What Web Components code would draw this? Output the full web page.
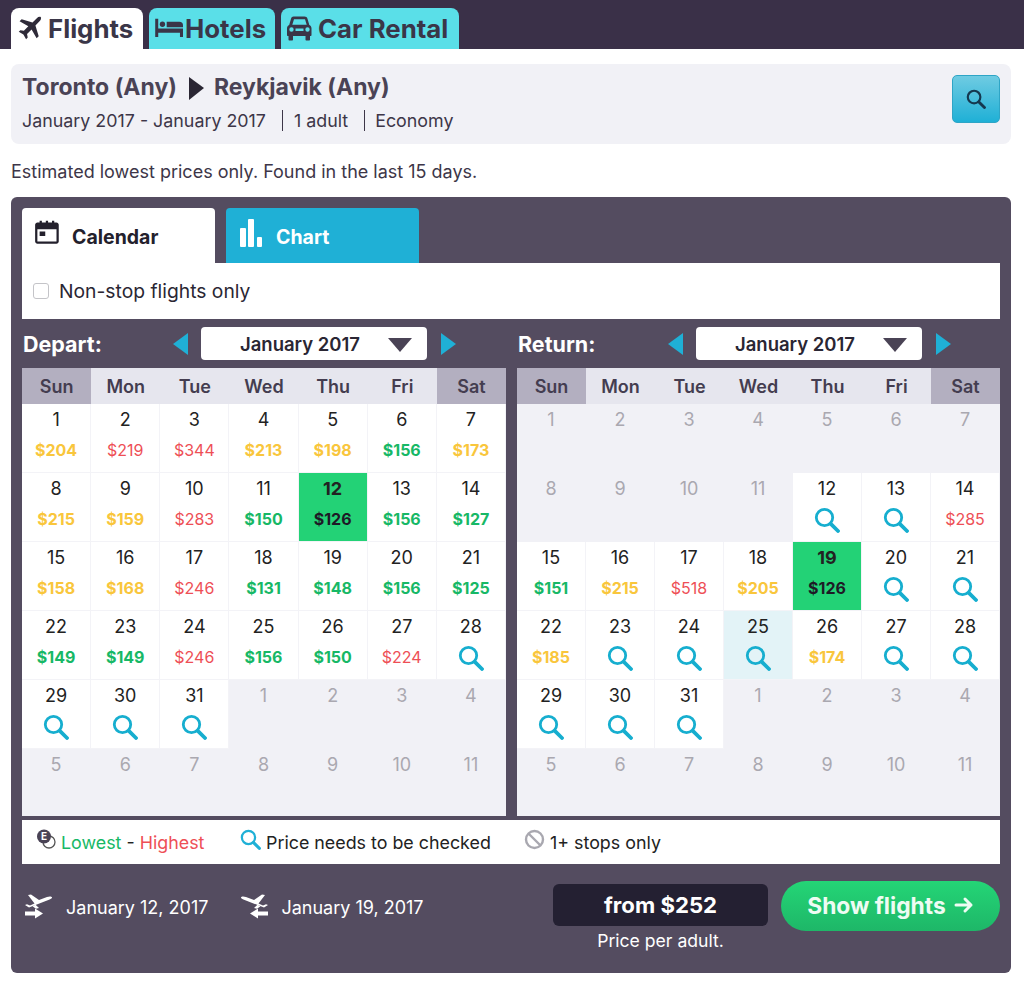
<!DOCTYPE html>
<html>
<head>
<meta charset="utf-8">
<style>
  html, body { margin: 0; padding: 0; background: #fff; }
  body { font-family: Inter, "Liberation Sans", sans-serif; color: #3d3648; }
</style>
</head>
<body>
<flight-search></flight-search>
<script>
const icons = {
  plane: `<path d="M21 2.2c-1-1-2.8-.7-4 .5l-3.7 3.7L4 3.6 2.200 5.400l7.500 4.300-3.800 3.900-3-.6L1.500 14.400l4 2.300 2.300 4 1.400-1.400-.6-3 3.900-3.800 4.300 7.500 1.800-1.800-2.800-9.300 3.700-3.700c1.200-1.200 1.500-2.900.5-4z"/>`,
  bed: `<path d="M1 4h2.500v8H24v7h-2.500v-3.500h-18V19H1z"/><circle cx="7" cy="8.500" r="2.200"/><path d="M10.500 6.500h10.500a3 3 0 0 1 3 3V11H10.500z"/>`,
  car: `<path fill-rule="evenodd" d="M6.500.5h11c1.500 0 2.600.9 3 2.200l1.800 6.300c1.300.6 2.200 1.900 2.200 3.400V19c0 .6-.4 1-1 1h-.5v3.500c0 .6-.4 1-1 1h-2.500c-.6 0-1-.4-1-1V20H6v3.500c0 .6-.4 1-1 1H2.500c-.6 0-1-.4-1-1V20H1c-.6 0-1-.4-1-1v-6.600c0-1.500.9-2.800 2.200-3.400L4 2.700C4.400 1.400 5.400.5 6.500.5zM7 3.200 5.300 8.800h14.400L18 3.200zM4.500 11.300a2.200 2.200 0 1 0 0 4.400 2.200 2.200 0 0 0 0-4.400zm16 0a2.200 2.200 0 1 0 0 4.400 2.200 2.200 0 0 0 0-4.400zM8.500 12.500v2.500h8v-2.500z"/>`,
  calendar: `<path fill-rule="evenodd" d="M3 3h2V1.500h2V3h3.500V1.500h2V3H16V1.500h2V3h2c1 0 2 1 2 2v15c0 1-1 2-2 2H3c-1 0-2-1-2-2V5c0-1 1-2 2-2zm0 6v11h17V9zM5 11h5v4H5z"/>`,
  takeoff: `<path d="M3 2l3-.5 8 5.500 8-3c2-.7 4.500-.7 5 .2.300.8-1 1.800-3 2.500L4 14.500 0 12l2-.8 3 1.300 4.500-2z"/><path d="M10.500 11.800 14 15l-3 .7-3.500-2.400z"/><path d="M0 18.500h10v-3l8 5-8 5v-3H0z"/>`
};

function svg(name, size, color) {
  return `<svg width="${size}" height="${size}" viewBox="0 0 24 24" fill="${color}" aria-hidden="true">${icons[name]}</svg>`;
}

function lens(size, color) {
  return `<svg width="${size}" height="${size}" viewBox="0 0 26 26" fill="none" stroke="${color}" aria-hidden="true"><circle cx="10.500" cy="10.500" r="8.200" stroke-width="2.800"/><path d="M16.800 16.800 24 24" stroke-width="3.800" stroke-linecap="round"/></svg>`;
}

class TopTabs extends HTMLElement {
  constructor() {
    super();
    this.attachShadow({mode: 'open'});
    this.shadowRoot.innerHTML = `
      <style>
        :host { display: flex; align-items: flex-end; gap: 6px; height: 49px; padding-left: 11px; background: #3a3048; }
        a { display: flex; align-items: center; height: 41px; box-sizing: border-box; border-radius: 8px 8px 0 0; background: #5adfe8; color: #3a3648; font-size: 25.800px; font-weight: 700; }
        a.on { background: #fff; }
        svg { flex: none; display: block; }
      </style>
      <a class="on" style="width:132px;padding-left:6px;gap:3px">${svg('plane', 28, '#2e2a38')}Flights</a>
      <a style="width:126px;padding-left:5px;gap:2px">${svg('bed', 29, '#3a3648')}Hotels</a>
      <a style="width:178px;padding-left:6px;gap:6px"><svg width="25" height="25" viewBox="0 0 25 25" fill="#3a3648" aria-hidden="true">${icons.car}</svg>Car Rental</a>`;
  }
}

class TripSummary extends HTMLElement {
  constructor() {
    super();
    this.attachShadow({mode: 'open'});
    this.shadowRoot.innerHTML = `
      <style>
        :host { display: flex; align-items: center; justify-content: space-between; height: 80px; margin: 15px 13px 0 11px; padding: 0 11px; box-sizing: border-box; background: #f1f1f6; border-radius: 8px; }
        .text { padding-bottom: 4px; }
        .route { display: flex; align-items: center; font-size: 23px; font-weight: 700; color: #4a4355; height: 30px; }
        .route svg { margin: 2px 10px 0 12px; }
        .meta { display: flex; align-items: center; margin-top: 7px; font-size: 17.850px; color: #3d3648; height: 24px; }
        .meta span + span { border-left: 1px solid #3d3648; margin-left: 16px; padding-left: 11px; }
        .meta span:last-child { padding-left: 10px; }
        .go { width: 48px; height: 48px; margin-top: -10px; box-sizing: border-box; border: 1px solid #2ea5c6; border-radius: 5px; background: linear-gradient(#6fcbe2, #1fb0d6); display: flex; align-items: center; justify-content: center; }
      </style>
      <div class="text">
        <div class="route">Toronto (Any)<svg width="15" height="24" viewBox="0 0 15 24" fill="#2a2633"><path d="M0 1l15 11L0 24z"/></svg>Reykjavik (Any)</div>
        <div class="meta"><span>January 2017 - January 2017</span><span>1 adult</span><span>Economy</span></div>
      </div>
      <div class="go">${lens(20, '#15384f')}</div>`;
  }
}

class CalMonth extends HTMLElement {
  constructor() {
    super();
    this.attachShadow({mode: 'open'});
    const days = ['Sun', 'Mon', 'Tue', 'Wed', 'Thu', 'Fri', 'Sat'];
    const cells = this.data.map(c => this.#cell(c)).join('');
    this.shadowRoot.innerHTML = `
      <style>
        :host { display: block; width: 484px; }
        .head { display: flex; align-items: center; height: 49px; color: #fff; font-size: 21.500px; font-weight: 700; }
        .label { width: 151px; padding-left: 1px; box-sizing: border-box; }
        .sel { display: flex; align-items: center; justify-content: center; position: relative; width: 226px; height: 33px; margin: 0 14px 0 13px; background: #fff; border-radius: 4px; color: #2a2633; font-size: 18.500px; font-weight: 600; box-sizing: border-box; padding-right: 28px; }
        .sel svg { position: absolute; right: 15px; top: 11px; }
        .week, .grid { display: grid; grid-template-columns: repeat(7, 1fr); }
        .week { height: 36px; background: #e6e6ee; }
        .week div { display: flex; align-items: center; justify-content: center; font-size: 18px; font-weight: 600; color: #443d50; }
        .week .end { background: #b3afc0; }
        .grid { grid-auto-rows: 69px; background: #f1f1f6; height: 412px; }
        .day { box-sizing: border-box; display: flex; flex-direction: column; align-items: center; padding-top: 5px; font-size: 18px; color: #222; background: #fff; border-right: 1px solid #f3f3f7; border-bottom: 1px solid #f3f3f7; }
        .day b { display: block; height: 21px; line-height: 21px; font-weight: 400; }
        .day i { display: block; margin-top: 9px; font-style: normal; font-size: 16px; line-height: 22px; font-weight: 400; }
        .day svg { margin-top: 8px; display: block; }
        .off { background: transparent; color: #aaa8b0; border-color: transparent; }
        .g i { color: #17b866; font-weight: 700; }
        .y i { color: #f9c63c; font-weight: 700; }
        .r i { color: #ee4f56; }
        .pick { background: #23d276; }
        .pick b { font-weight: 700; }
        .pick i { color: #1e1a26; font-weight: 700; }
        .hi { background: #e3f3f7; }
      </style>
      <div class="head">
        <div class="label">${this.getAttribute('label')}</div>
        <svg width="15" height="22" viewBox="0 0 15 22" fill="#1fb0d6"><path d="M15 0v22L0 11z"/></svg>
        <div class="sel">January 2017<svg width="24" height="14" viewBox="0 0 24 14" fill="#4a4355"><path d="M0 0h24L12 14z"/></svg></div>
        <svg width="15" height="22" viewBox="0 0 15 22" fill="#1fb0d6"><path d="M0 0v22l15-11z"/></svg>
      </div>
      <div class="week">${days.map((d, i) => `<div class="${i % 6 ? '' : 'end'}">${d}</div>`).join('')}</div>
      <div class="grid">${cells}</div>`;
  }

  get data() {
    return JSON.parse(this.getAttribute('days'));
  }

  #cell([day, kind, price]) {
    if (kind === 'off') return `<div class="day off"><b>${day}</b></div>`;
    if (kind === 's' || kind === 'hi') return `<div class="day ${kind}"><b>${day}</b>${lens(26, '#16aecf')}</div>`;
    return `<div class="day ${kind}"><b>${day}</b><i>$${price}</i></div>`;
  }
}

class CalLegend extends HTMLElement {
  constructor() {
    super();
    this.attachShadow({mode: 'open'});
    this.shadowRoot.innerHTML = `
      <style>
        :host { display: flex; align-items: center; height: 44px; margin-top: 4px; background: #fff; font-size: 17.850px; color: #222; padding-left: 13px; box-sizing: border-box; }
        .g { color: #17b866; } .r { color: #ee4f56; }
        span.item { display: flex; align-items: center; gap: 5px; white-space: pre; }
        svg { display: block; margin-top: -6px; }
      </style>
      <span class="item" style="width:205px;gap:4px"><svg width="22" height="22" viewBox="0 0 22 22"><circle cx="14" cy="14" r="6" fill="none" stroke="#555" stroke-width="1.300"/><circle cx="9" cy="8.500" r="7" fill="#4a4355"/><text x="9" y="12" font-size="10" font-weight="700" text-anchor="middle" fill="#fff" font-family="Inter">E</text></svg><span><span class="g">Lowest</span> - <span class="r">Highest</span></span></span>
      <span class="item" style="width:284px">${lens(21, '#1fb0d6')}<span>Price needs to be checked</span></span>
      <span class="item"><svg width="21" height="21" viewBox="0 0 21 21" fill="none" stroke="#a9a8b0" stroke-width="2.400"><circle cx="10.500" cy="10.500" r="8.500"/><path d="M4.500 4.500l12 12"/></svg><span>1+ stops only</span></span>`;
  }
}

class CalFooter extends HTMLElement {
  constructor() {
    super();
    this.attachShadow({mode: 'open'});
    const plane = `<svg width="27" height="27" viewBox="0 0 27 27" fill="#fff" aria-hidden="true">`;
    this.shadowRoot.innerHTML = `
      <style>
        :host { display: flex; align-items: flex-start; padding-top: 17px; height: 87px; box-sizing: border-box; color: #fff; font-size: 18px; }
        .date { display: flex; align-items: center; height: 50px; padding-left: 3px; }
        .date span { padding-top: 2px; }
        .date svg { margin-right: 14px; }
        .date + .date { margin-left: 30px; }
        .date + .date svg { margin-right: 13px; }
        .fill { flex: 1; }
        .price { width: 215px; margin-right: 13px; padding-top: 3px; text-align: center; font-size: 17.600px; }
        .price div { height: 42px; line-height: 42px; margin-bottom: 4px; background: #242032; border-radius: 6px; font-size: 22.200px; font-weight: 700; }
        .show { display: flex; align-items: center; justify-content: center; gap: 8px; width: 219px; height: 50px; padding-bottom: 2px; box-sizing: border-box; border-radius: 25px; background: linear-gradient(#24d576, #1eb768); font-size: 22.800px; font-weight: 700; color: #eefcf3; }
      </style>
      <div class="date">${plane}${icons.takeoff}</svg><span>January 12, 2017</span></div>
      <div class="date">${plane}<g transform="matrix(-1 0 0 1 27 0)">${icons.takeoff}</g></svg><span>January 19, 2017</span></div>
      <div class="fill"></div>
      <div class="price"><div>from $252</div>Price per adult.</div>
      <div class="show">Show flights <svg width="20" height="18" viewBox="0 0 20 18" fill="none" stroke="#eefcf3" stroke-width="3" stroke-linecap="round" stroke-linejoin="round"><path d="M2 9h15M11 3l6 6-6 6"/></svg></div>`;
  }
}

class CalPanel extends HTMLElement {
  constructor() {
    super();
    this.attachShadow({mode: 'open'});
    const q = (from, to, kind) => {
      const out = [];
      for (let d = from; d <= to; d++) out.push([d, kind]);
      return out;
    };
    const depart = [
      [1,'y',204],[2,'r',219],[3,'r',344],[4,'y',213],[5,'y',198],[6,'g',156],[7,'y',173],
      [8,'y',215],[9,'y',159],[10,'r',283],[11,'g',150],[12,'pick',126],[13,'g',156],[14,'g',127],
      [15,'y',158],[16,'y',168],[17,'r',246],[18,'g',131],[19,'g',148],[20,'g',156],[21,'g',125],
      [22,'g',149],[23,'g',149],[24,'r',246],[25,'g',156],[26,'g',150],[27,'r',224],
      ...q(28, 31, 's'), ...q(1, 11, 'off')
    ];
    const ret = [
      ...q(1, 11, 'off'), ...q(12, 13, 's'), [14,'r',285],
      [15,'g',151],[16,'y',215],[17,'r',518],[18,'y',205],[19,'pick',126], ...q(20, 21, 's'),
      [22,'y',185], ...q(23, 24, 's'), [25,'hi'], [26,'y',174], ...q(27, 28, 's'),
      ...q(29, 31, 's'), ...q(1, 11, 'off')
    ];
    this.shadowRoot.innerHTML = `
      <style>
        :host { display: block; margin: 0 13px 0 11px; padding: 11px 11px 0 11px; height: 776px; box-sizing: border-box; background: #544c60; border-radius: 6px; }
        .tabs { display: flex; gap: 11px; height: 55px; }
        .tab { display: flex; align-items: center; width: 193px; box-sizing: border-box; padding-left: 12px; border-radius: 4px 4px 0 0; font-size: 19.500px; font-weight: 700; }
        .tab span { padding-top: 3px; }
        .tab svg { display: block; margin-top: -6px; }
        .cal { background: #fff; color: #23202c; gap: 11px; }
        .chart { background: #1fb0d6; color: #fff; gap: 10px; }
        .stop { display: flex; align-items: center; height: 56px; background: #fff; padding-left: 11px; font-size: 19.300px; color: #2a2633; gap: 10px; }
        .box { width: 16px; height: 16px; box-sizing: border-box; border: 1px solid #c4c4c8; border-radius: 3px; background: #fff; }
        .months { display: flex; justify-content: space-between; }
      </style>
      <div class="tabs">
        <div class="tab cal">${svg('calendar', 27, '#23202c')}<span>Calendar</span></div>
        <div class="tab chart"><svg width="28" height="28" viewBox="0 0 28 28" fill="#fff" aria-hidden="true"><rect x="2" y="9" width="6" height="19" rx="1"/><rect x="10" y="0" width="6" height="28" rx="1"/><rect x="19" y="18" width="5" height="10" rx="1"/></svg><span>Chart</span></div>
      </div>
      <div class="stop"><span class="box"></span>Non-stop flights only</div>
      <div class="months">
        <cal-month label="Depart:" days='${JSON.stringify(depart)}'></cal-month>
        <cal-month style="width:483px" label="Return:" days='${JSON.stringify(ret)}'></cal-month>
      </div>
      <cal-legend></cal-legend>
      <cal-footer></cal-footer>`;
  }
}

class FlightSearch extends HTMLElement {
  constructor() {
    super();
    this.attachShadow({mode: 'open'});
    this.shadowRoot.innerHTML = `
      <style>
        :host { display: block; }
        p { margin: 0; padding: 17px 0 15px 11px; height: 53px; box-sizing: border-box; font-size: 18px; line-height: 21px; color: #3d3648; }
      </style>
      <top-tabs></top-tabs>
      <trip-summary></trip-summary>
      <p>Estimated lowest prices only. Found in the last 15 days.</p>
      <cal-panel></cal-panel>`;
  }
}

customElements.define('top-tabs', TopTabs);
customElements.define('trip-summary', TripSummary);
customElements.define('cal-legend', CalLegend);
customElements.define('cal-footer', CalFooter);
customElements.define('cal-month', CalMonth);
customElements.define('cal-panel', CalPanel);
customElements.define('flight-search', FlightSearch);
</script>
</body>
</html>
